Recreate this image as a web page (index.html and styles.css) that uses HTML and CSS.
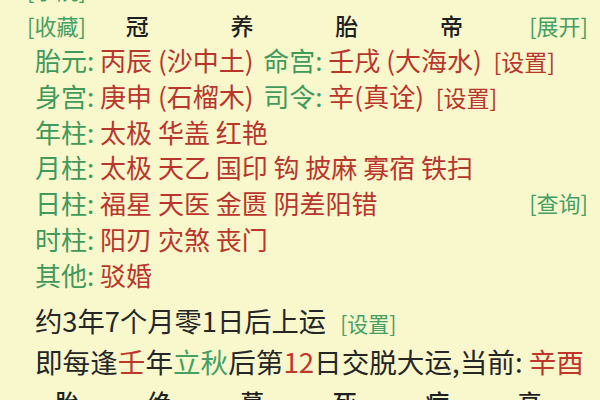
FILE: index.html
```html
<!DOCTYPE html>
<html lang="zh-CN">
<head>
<meta charset="utf-8">
<title>排盘</title>
<link rel="stylesheet" href="styles.css">
</head>
<body>
<div class="page">
  <div class="cut"><span class="g">[学院]</span></div>
  <div class="head">
    <span class="g link">[收藏]</span>
    <span class="hc">冠</span>
    <span class="hc">养</span>
    <span class="hc">胎</span>
    <span class="hc">帝</span>
    <span class="g link open">[展开]</span>
  </div>
  <div class="info">
    <div class="row"><span class="k">胎元:</span> <span class="v">丙辰 (沙中土)</span> <span class="k k2">命宫:</span> <span class="v">壬戌 (大海水)</span> <span class="v btn">[设置]</span></div>
    <div class="row"><span class="k">身宫:</span> <span class="v">庚申 (石榴木)</span> <span class="k k2">司令:</span> <span class="v">辛(真诠)</span> <span class="v btn">[设置]</span></div>
    <div class="row"><span class="k">年柱:</span> <span class="v">太极 华盖 红艳</span></div>
    <div class="row"><span class="k">月柱:</span> <span class="v">太极 天乙 国印 钩 披麻 寡宿 铁扫</span></div>
    <div class="row split"><span><span class="k">日柱:</span> <span class="v">福星 天医 金匮 阴差阳错</span></span><span class="g link">[查询]</span></div>
    <div class="row"><span class="k">时柱:</span> <span class="v">阳刃 灾煞 丧门</span></div>
    <div class="row"><span class="k">其他:</span> <span class="v">驳婚</span></div>
  </div>
  <div class="yun">约3年7个月零1日后上运 <span class="g set">[设置]</span></div>
  <div class="yun big">即每逢<span class="r">壬</span>年<span class="g">立秋</span>后第<span class="r">12</span>日交脱大运,当前: <span class="r">辛酉</span></div>
  <div class="foot">
    <span>胎</span><span>绝</span><span>墓</span><span>死</span><span>病</span><span>衰</span>
  </div>
</div>
</body>
</html>
```
FILE: styles.css
```css
html, body {
  margin: 0;
  padding: 0;
  background: #f9f7cc;
  overflow: hidden;
}
.page {
  width: 600px;
  height: 400px;
  overflow: hidden;
  font-family: "Noto Sans CJK SC", "Noto Sans", sans-serif;
  color: #262626;
}
.g { color: #44a064; }
.r { color: #c1352b; }
.cut {
  height: 35px;
  line-height: 35px;
  margin-top: -28px;
  padding-left: 27px;
  font-size: 22px;
}
.head {
  display: grid;
  grid-template-columns: 58px repeat(4, 104.7px) 1fr;
  align-items: center;
  height: 35px;
  padding-left: 27px;
  padding-right: 12px;
  font-size: 23px;
}
.link {
  font-size: 22px;
  white-space: nowrap;
}
.hc {
  text-align: center;
  font-weight: 500;
  color: #1f1f1f;
}
.open { justify-self: end; }
.info {
  padding-left: 35px;
  padding-right: 12px;
  font-size: 26px;
}
.row {
  height: 35.8px;
  line-height: 35.8px;
  white-space: nowrap;
}
.split {
  display: flex;
  justify-content: space-between;
}
.k { color: #3f9a5c; }
.k2 { margin-left: 4px; }
.v { color: #b9362c; }
.btn { margin-left: 6px; font-size: 23px; }
.yun {
  padding-left: 35px;
  margin-top: 7px;
  font-size: 27.3px;
  line-height: 41px;
  height: 41px;
  white-space: nowrap;
}
.set {
  font-size: 21px;
  margin-left: 8px;
}
.big {
  margin-top: 0;
  font-size: 27.6px;
}
.foot {
  display: grid;
  grid-template-columns: repeat(6, 92.5px);
  padding-left: 21px;
  font-size: 24px;
  line-height: 40px;
  font-weight: 500;
  color: #1f1f1f;
}
.foot span { text-align: center; }
```
